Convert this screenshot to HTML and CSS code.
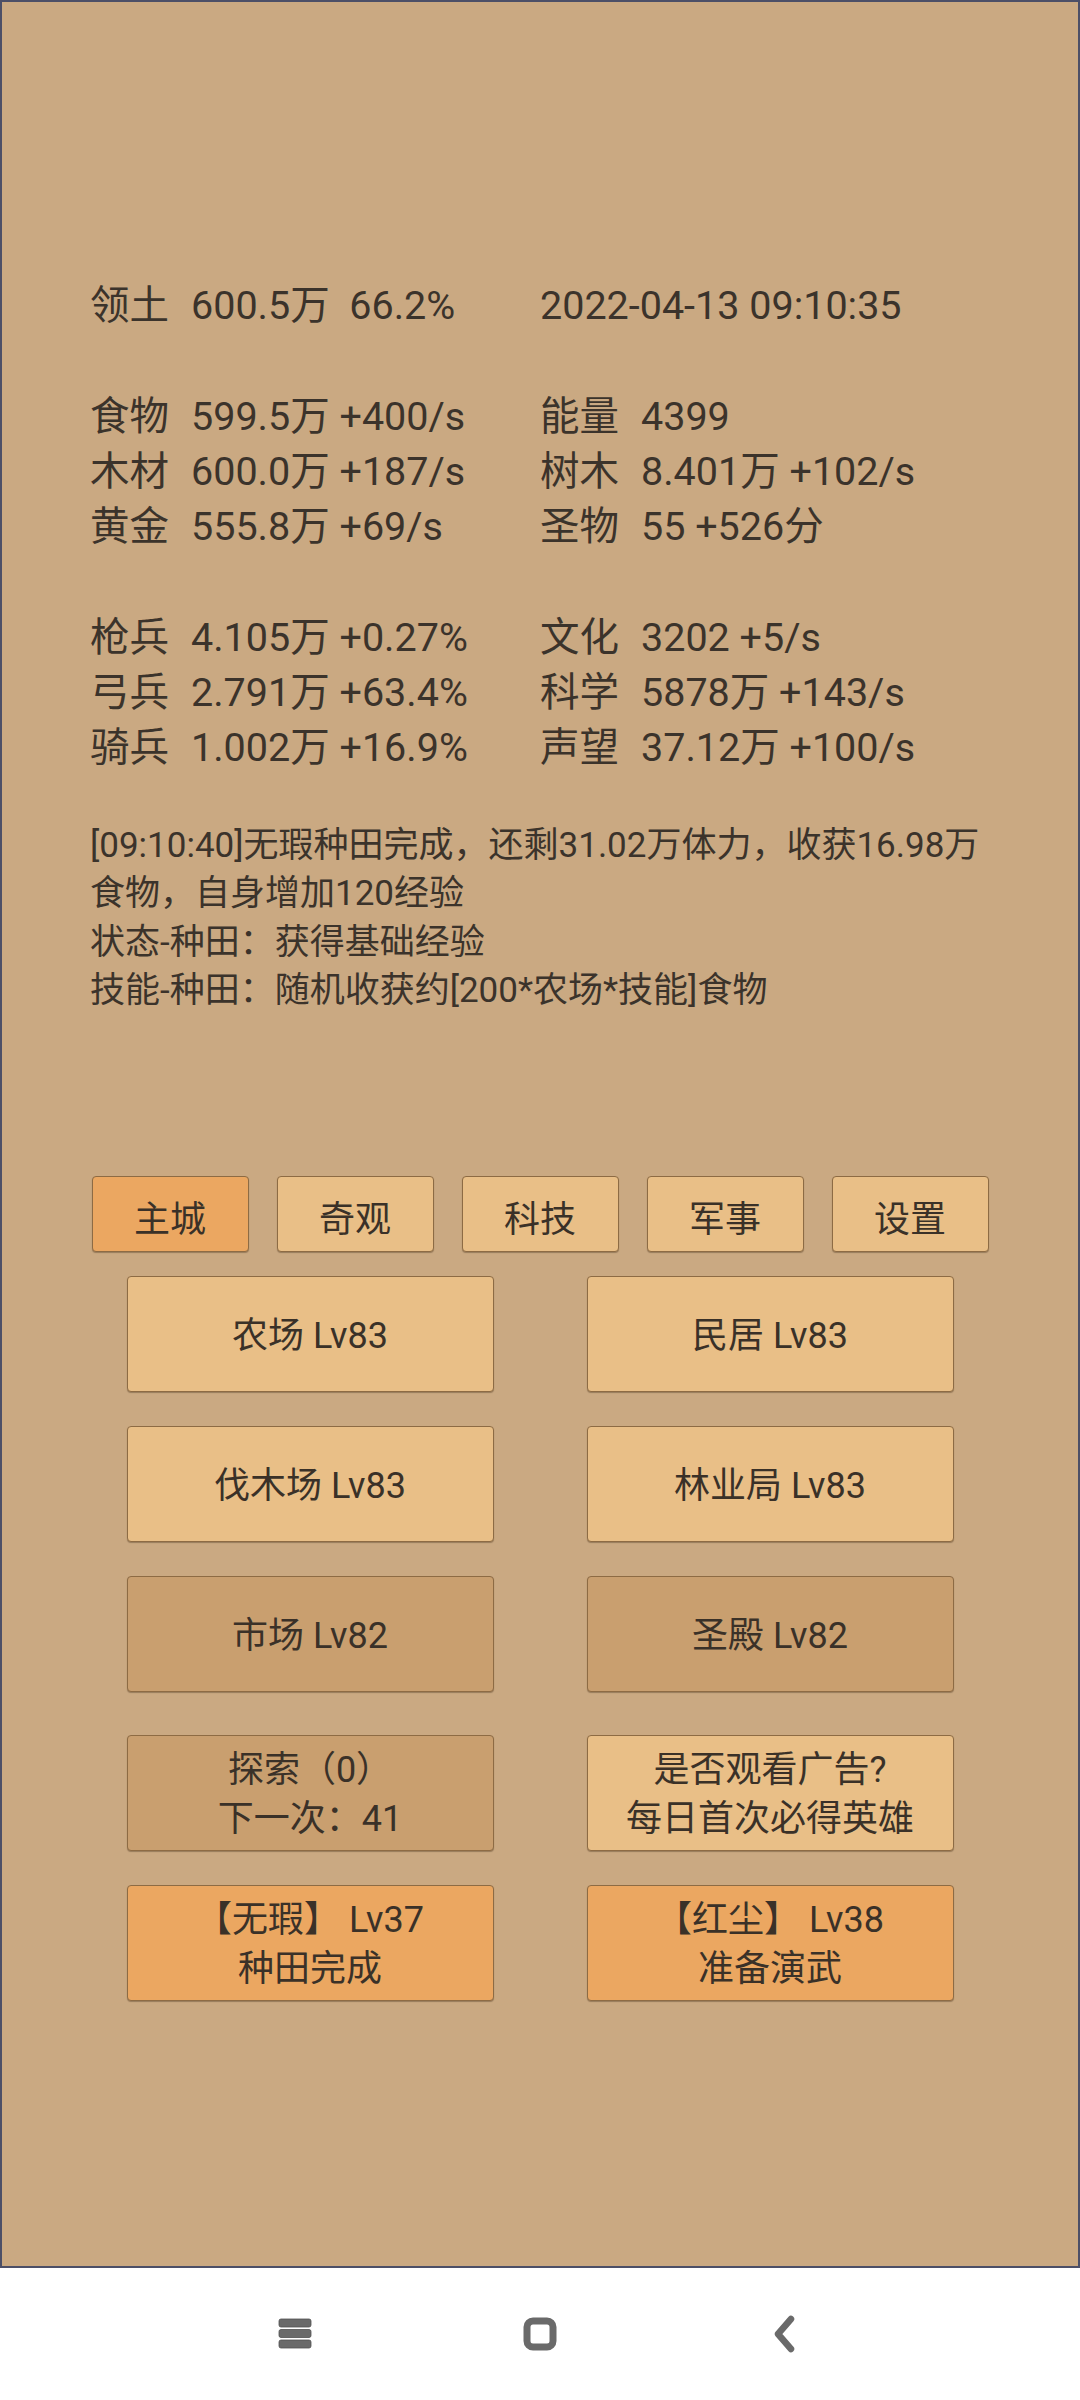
FILE: index.html
```html
<!DOCTYPE html>
<html lang="zh-CN">
<head>
    <meta charset="UTF-8">
    <meta name="viewport" content="width=device-width, initial-scale=1.0">
    <title>主城</title>
    <link rel="stylesheet" href="styles.css">
</head>
<body>
    <div id="screen">
        <div class="stats">
            <div class="group">
                <div><span class="lbl">领土</span>600.5万&nbsp;&nbsp;66.2%</div>
                <div>2022-04-13 09:10:35</div>
            </div>
            <div class="group">
                <div><span class="lbl">食物</span>599.5万 +400/s</div>
                <div><span class="lbl">能量</span>4399</div>
                <div><span class="lbl">木材</span>600.0万 +187/s</div>
                <div><span class="lbl">树木</span>8.401万 +102/s</div>
                <div><span class="lbl">黄金</span>555.8万 +69/s</div>
                <div><span class="lbl">圣物</span>55 +526分</div>
            </div>
            <div class="group">
                <div><span class="lbl">枪兵</span>4.105万 +0.27%</div>
                <div><span class="lbl">文化</span>3202 +5/s</div>
                <div><span class="lbl">弓兵</span>2.791万 +63.4%</div>
                <div><span class="lbl">科学</span>5878万 +143/s</div>
                <div><span class="lbl">骑兵</span>1.002万 +16.9%</div>
                <div><span class="lbl">声望</span>37.12万 +100/s</div>
            </div>
        </div>

        <div id="log">
            <p>[09:10:40]无瑕种田完成，还剩31.02万体力，收获16.98万食物，自身增加120经验</p>
            <p>状态-种田：获得基础经验</p>
            <p>技能-种田：随机收获约[200*农场*技能]食物</p>
        </div>

        <div id="tabs">
            <button class="tab active">主城</button>
            <button class="tab">奇观</button>
            <button class="tab">科技</button>
            <button class="tab">军事</button>
            <button class="tab">设置</button>
        </div>

        <div class="buildings">
            <button class="bld">农场 Lv83</button>
            <button class="bld">民居 Lv83</button>
            <button class="bld">伐木场 Lv83</button>
            <button class="bld">林业局 Lv83</button>
            <button class="bld dim">市场 Lv82</button>
            <button class="bld dim">圣殿 Lv82</button>
        </div>

        <div class="buildings extra">
            <button class="bld dim"><span>探索（0）</span><span>下一次：41</span></button>
            <button class="bld"><span>是否观看广告?</span><span>每日首次必得英雄</span></button>
            <button class="bld hero"><span>【无瑕】 Lv37</span><span>种田完成</span></button>
            <button class="bld hero"><span>【红尘】 Lv38</span><span>准备演武</span></button>
        </div>
    </div>

    <div id="nav-bar">
        <div class="nav-btn">
            <svg width="34" height="32" viewBox="0 0 34 32">
                <rect x="1" y="1" width="32" height="8" rx="2"/>
                <rect x="1" y="11.5" width="32" height="8" rx="2"/>
                <rect x="1" y="22" width="32" height="8" rx="2"/>
            </svg>
        </div>
        <div class="nav-btn">
            <svg width="36" height="36" viewBox="0 0 36 36">
                <rect class="ring" x="5" y="5" width="26" height="26" rx="6"/>
            </svg>
        </div>
        <div class="nav-btn">
            <svg width="26" height="38" viewBox="0 0 26 38">
                <polyline class="chev" points="19,4 6,19 19,34"/>
            </svg>
        </div>
    </div>
</body>
</html>
```

FILE: styles.css
```css
body {
    margin: 0;
    padding: 0;
    background: #fff;
    font-family: Roboto, "Noto Sans CJK SC", sans-serif;
    color: #3b332b;
}

#screen {
    height: 2268px;
    box-sizing: border-box;
    border: 2px solid #4c4f67;
    background: #caa982;
    padding-top: 276px;
}

/* resource numbers */
.stats {
    padding-left: 88px;
    font-size: 39.5px;
    line-height: 55.3px;
}

.group {
    display: grid;
    grid-template-columns: 450px 1fr;
    white-space: nowrap;
}

.group + .group {
    margin-top: 55.3px;
}

.lbl {
    display: inline-block;
    width: 101px;
}

#log {
    margin-top: 46.5px;
    padding: 0 78px 0 88px;
    font-size: 35px;
    line-height: 48.3px;
}

#log p {
    margin: 0;
}

/* tabs and buttons */
#tabs {
    display: flex;
    justify-content: center;
    gap: 28px;
    margin-top: 161px;
}

.tab, .bld {
    box-sizing: border-box;
    margin: 0;
    padding: 3px 0 0;
    border: 1px solid #8d6b44;
    border-radius: 4px;
    background: #e9bf87;
    box-shadow: 0 1px 1px rgba(60, 40, 20, 0.35);
    font-family: inherit;
    color: #3a3128;
    font-size: 36px;
}

.tab {
    width: 157px;
    height: 76px;
}

.tab.active {
    background: #eba761;
}

.buildings {
    display: grid;
    grid-template-columns: 367px 367px;
    grid-auto-rows: 116px;
    column-gap: 93px;
    row-gap: 34px;
    justify-content: center;
    margin-top: 24px;
}

.buildings.extra {
    margin-top: 43px;
}

.bld {
    display: flex;
    flex-direction: column;
    align-items: center;
    justify-content: center;
    line-height: 48.5px;
}

.bld.dim {
    background: #c99f6f;
}

.bld.hero {
    background: #eba761;
}

/* system navigation */
#nav-bar {
    height: 132px;
    display: flex;
    justify-content: center;
    align-items: center;
    gap: 165px;
}

.nav-btn {
    width: 80px;
    display: flex;
    justify-content: center;
}

.nav-btn svg {
    fill: #6a6a6a;
    stroke: #505050;
    stroke-width: 0.8;
}

.nav-btn .ring {
    fill: none;
    stroke: #6a6a6a;
    stroke-width: 7;
}

.nav-btn .chev {
    fill: none;
    stroke: #6a6a6a;
    stroke-width: 6.5;
    stroke-linecap: round;
    stroke-linejoin: round;
}
```
